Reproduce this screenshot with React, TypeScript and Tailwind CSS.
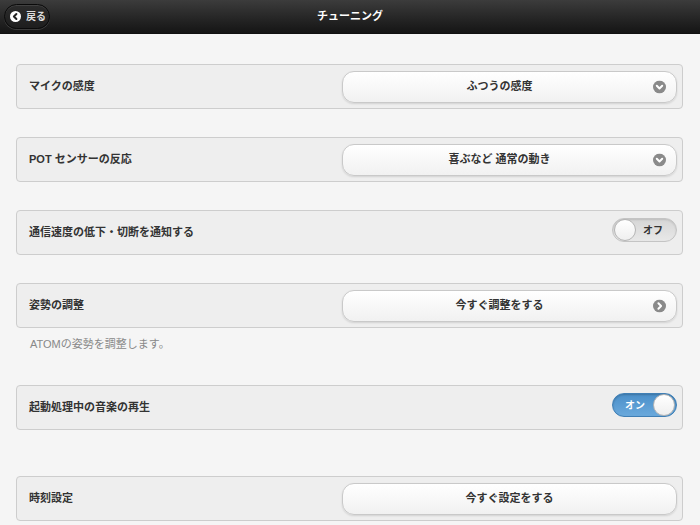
import React from "react";

const font = "'Liberation Sans', 'Noto Sans CJK JP', sans-serif";

function ChevronCircle({ dir }: { dir: "down" | "right" }) {
  return (
    <svg width="13" height="13" viewBox="0 0 13 13" className="shrink-0">
      <circle cx="6.5" cy="6.5" r="6.5" fill="#8a8a8a" />
      {dir === "down" ? (
        <path d="M3.8 5.3 L6.5 8 L9.2 5.3" fill="none" stroke="#fff" strokeWidth="2" strokeLinecap="round" strokeLinejoin="round" />
      ) : (
        <path d="M5.4 3.8 L8.1 6.5 L5.4 9.2" fill="none" stroke="#fff" strokeWidth="2" strokeLinecap="round" strokeLinejoin="round" />
      )}
    </svg>
  );
}

function Row({ label, children }: { label: string; children?: React.ReactNode }) {
  return (
    <div className="h-[45px] flex items-center justify-between rounded-[4px] border border-[#cdcdcd] bg-[#eeeeee] pl-[12px] pr-[5px]">
      <span className="text-[11px] font-bold text-[#333]">{label}</span>
      {children}
    </div>
  );
}

function SelectButton({ text, icon }: { text: string; icon?: "down" | "right" }) {
  return (
    <div
      className={
        icon
          ? "relative w-[335px] h-[32px] flex items-center justify-center pr-[20px] rounded-[12px] border border-[#c9c9c9] bg-gradient-to-b from-[#ffffff] to-[#f1f1f1] shadow-[0_1px_2px_rgba(0,0,0,0.12)]"
          : "relative w-[335px] h-[32px] flex items-center justify-center rounded-[12px] border border-[#c9c9c9] bg-gradient-to-b from-[#ffffff] to-[#f1f1f1] shadow-[0_1px_2px_rgba(0,0,0,0.12)]"
      }
    >
      <span className="text-[11px] font-bold text-[#333]">{text}</span>
      {icon && (
        <span className="absolute right-[10px] top-1/2 -translate-y-1/2 flex">
          <ChevronCircle dir={icon} />
        </span>
      )}
    </div>
  );
}

function Toggle({ on }: { on: boolean }) {
  if (on) {
    return (
      <div className="mb-[5px] w-[65px] h-[24px] rounded-full border border-[#3f7fb5] bg-gradient-to-b from-[#4a8fc9] to-[#6aa9dc] flex items-center justify-between pl-[12px] pr-[1px] shadow-[inset_0_1px_2px_rgba(0,0,0,0.2)]">
        <span className="text-[10px] font-bold text-white">オン</span>
        <span className="w-[22px] h-[22px] rounded-full bg-gradient-to-b from-[#ffffff] to-[#efefef] border border-[#b5b5b5]" />
      </div>
    );
  }
  return (
    <div className="mb-[5px] w-[65px] h-[24px] rounded-full border border-[#c4c4c4] bg-gradient-to-b from-[#d6d6d6] to-[#e8e8e8] flex items-center pl-[1px] shadow-[inset_0_1px_2px_rgba(0,0,0,0.12)]">
      <span className="w-[22px] h-[22px] rounded-full bg-gradient-to-b from-[#ffffff] to-[#efefef] border border-[#b5b5b5]" />
      <span className="ml-[7px] text-[10px] font-bold text-[#333]">オフ</span>
    </div>
  );
}

export default function App() {
  return (
    <div className="w-[700px] h-[525px] overflow-hidden bg-[#f5f5f5]" style={{ fontFamily: font }}>
      <div className="relative h-[34px] border-b border-[#111] bg-gradient-to-b from-[#3c3c3c] to-[#151515] flex items-center justify-center">
        <div className="absolute left-[4px] top-[4px] w-[46px] h-[25px] rounded-full border border-[#0a0a0a] bg-gradient-to-b from-[#2c2c2c] to-[#1e1e1e] shadow-[0_1px_0_rgba(255,255,255,0.15),inset_0_1px_0_rgba(255,255,255,0.1)] flex items-center pl-[5px]">
          <svg width="11" height="11" viewBox="0 0 11 11">
            <circle cx="5.5" cy="5.5" r="5.5" fill="#fff" />
            <path d="M6.4 3 L3.9 5.5 L6.4 8" fill="none" stroke="#222" strokeWidth="2" strokeLinecap="round" strokeLinejoin="round" />
          </svg>
          <span className="ml-[5px] text-[10px] font-bold text-[#ddd]">戻る</span>
        </div>
        <span className="text-[11px] font-bold text-white">チューニング</span>
      </div>

      <div className="pl-[16px] pr-[17px] pt-[30px] flex flex-col">
        <Row label="マイクの感度">
          <SelectButton text="ふつうの感度" icon="down" />
        </Row>
        <div className="mt-[28px]">
          <Row label="POT センサーの反応">
            <SelectButton text="喜ぶなど 通常の動き" icon="down" />
          </Row>
        </div>
        <div className="mt-[28px]">
          <Row label="通信速度の低下・切断を通知する">
            <Toggle on={false} />
          </Row>
        </div>
        <div className="mt-[28px]">
          <Row label="姿勢の調整">
            <SelectButton text="今すぐ調整をする" icon="right" />
          </Row>
        </div>
        <div className="h-[57px] pt-[8px] pl-[14px]">
          <span className="block leading-[16px] text-[11px] text-[#888]">ATOMの姿勢を調整します。</span>
        </div>
        <Row label="起動処理中の音楽の再生">
          <Toggle on={true} />
        </Row>
        <div className="mt-[46px]">
          <Row label="時刻設定">
            <SelectButton text="今すぐ設定をする" />
          </Row>
        </div>
      </div>
    </div>
  );
}
